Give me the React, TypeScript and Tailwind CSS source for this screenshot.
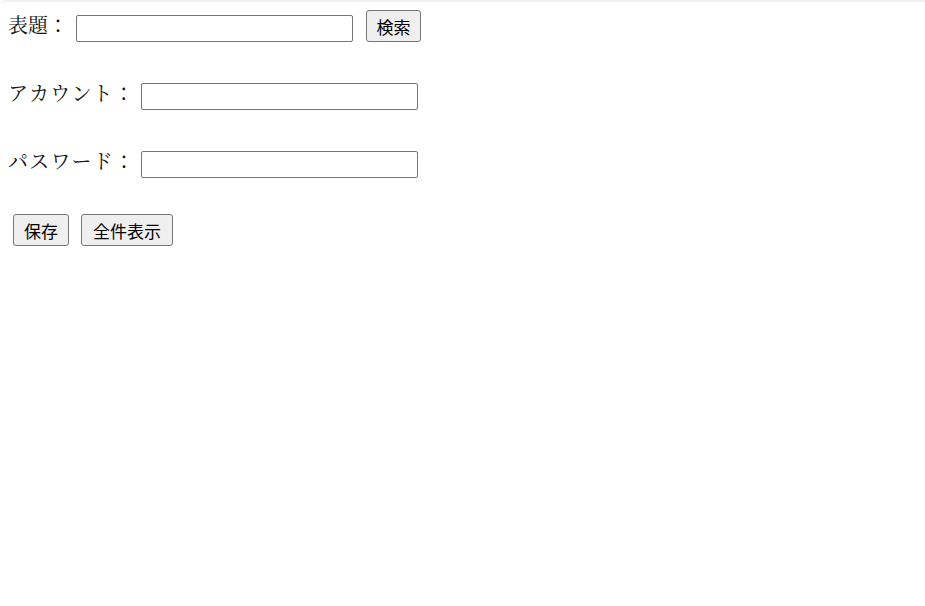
import React from "react";

const serif = { fontFamily: '"Liberation Serif", "Noto Serif CJK JP", "Noto Sans CJK JP", serif' };
const sans = { fontFamily: '"Noto Sans CJK JP", "Liberation Sans", sans-serif' };

function Btn({ children, w }: { children: React.ReactNode; w: string }) {
  return (
    <button
      className={`h-[32px] ${w} bg-[#efefef] border border-[#767676] rounded-[3px] text-[17px] leading-none text-black flex items-center justify-center`}
      style={sans}
    >
      {children}
    </button>
  );
}

export default function App() {
  return (
    <div className="w-[925px] h-[606px] bg-white border-t-2 border-[#eef1f0] rounded-tl-[6px]">
      <div className="flex flex-col gap-[36px] pt-[8px]">
        <div className="flex items-end h-[32px]">
          <span className="shrink-0 whitespace-nowrap w-[76px] pl-[8px] text-[20px] leading-[26px] mb-[3px] text-[#111]" style={serif}>
            表題：
          </span>
          <input className="w-[277px] h-[27px] border border-[#767676] rounded-[2px] bg-white" />
          <div className="ml-[13px]">
            <Btn w="w-[55px]">検索</Btn>
          </div>
        </div>
        <div className="flex items-end h-[32px]">
          <span className="shrink-0 whitespace-nowrap w-[141px] pl-[8px] text-[20px] leading-[26px] mb-[3px] tracking-[1.2px] text-[#111]" style={serif}>
            アカウント：
          </span>
          <input className="w-[277px] h-[27px] border border-[#767676] rounded-[2px] bg-white" />
        </div>
        <div className="flex items-end h-[32px]">
          <span className="shrink-0 whitespace-nowrap w-[141px] pl-[8px] text-[20px] leading-[26px] mb-[3px] tracking-[1.2px] text-[#111]" style={serif}>
            パスワード：
          </span>
          <input className="w-[277px] h-[27px] border border-[#767676] rounded-[2px] bg-white" />
        </div>
        <div className="flex items-end h-[32px] pl-[13px] gap-[12px]">
          <Btn w="w-[56px]">保存</Btn>
          <Btn w="w-[92px]">全件表示</Btn>
        </div>
      </div>
    </div>
  );
}
